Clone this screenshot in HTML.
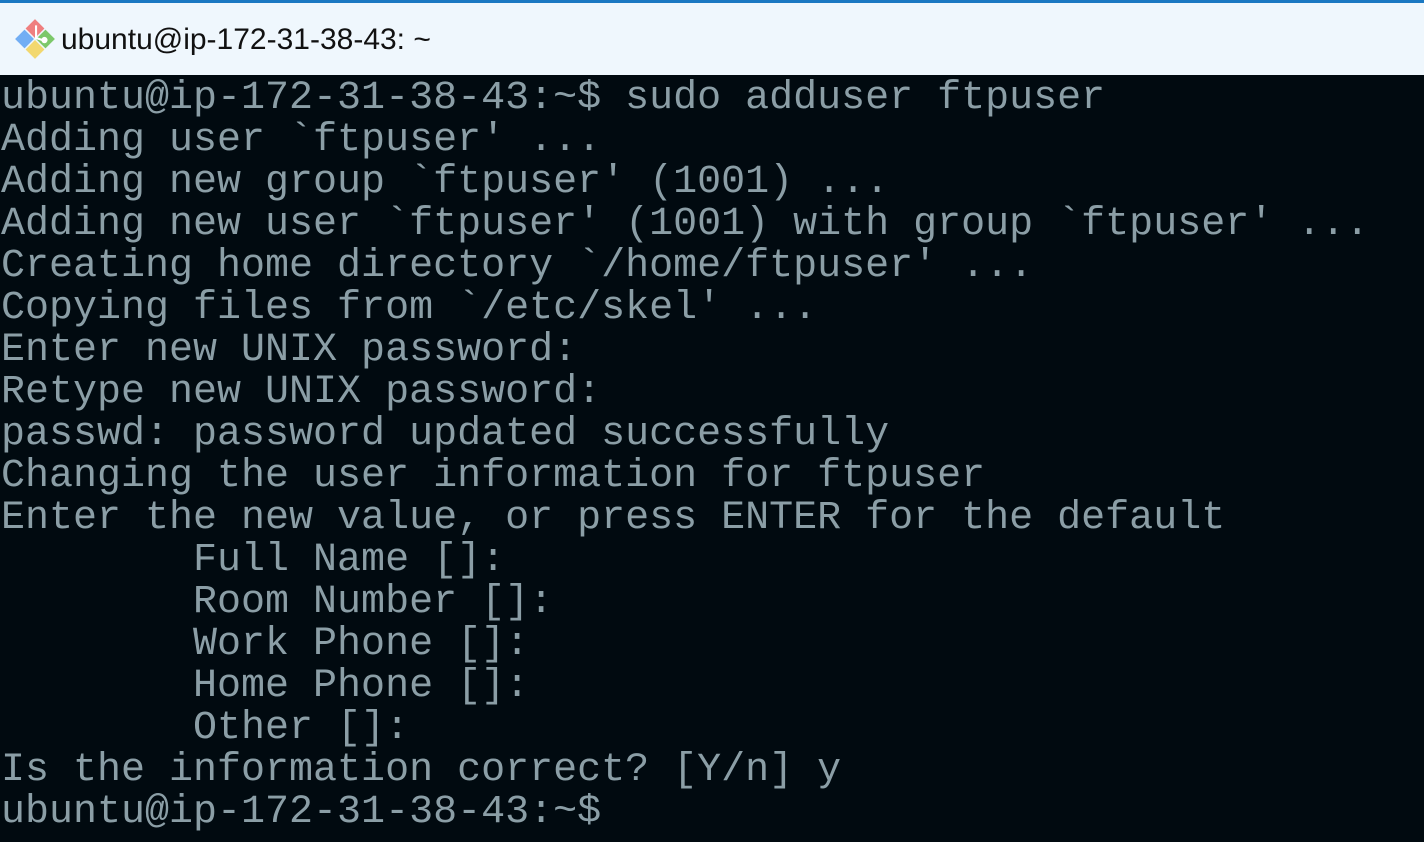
<!DOCTYPE html>
<html><head><meta charset="utf-8"><style>
html,body{margin:0;padding:0;width:1424px;height:842px;overflow:hidden;background:#010a10}
.top{position:absolute;left:0;top:0;width:1424px;height:3px;background:#1a78c2}
.bar{position:absolute;left:0;top:3px;width:1424px;height:72px;background:#eff7fd}
.title{position:absolute;left:61px;top:20px;font:30px "Liberation Sans",sans-serif;color:#111}
.term{position:absolute;left:0;top:75px;width:1424px;height:767px;background:#010a10}
pre{margin:0;position:absolute;left:1px;top:3px;font:40px/42px "Liberation Mono",monospace;color:#8b9ea6;letter-spacing:0}
</style></head><body>
<div class="top"></div>
<div class="bar">
<svg style="position:absolute;left:13px;top:14px" width="44" height="44" viewBox="0 0 42 42">
<path d="M21 2 L30 11 L21 20 L12 11Z" fill="#ef7f7f"/>
<path d="M31 12 L40 21 L31 30 L22 21Z" fill="#7cc86a"/>
<path d="M21 22 L30 31 L21 40 L12 31Z" fill="#f2d86f"/>
<path d="M11 12 L20 21 L11 30 L2 21Z" fill="#72aef4"/>
<circle cx="30" cy="22" r="3" fill="#fff"/><path d="M22 8 L22 20 L28 22" stroke="#fff" stroke-width="2" fill="none"/>
</svg>
<div class="title">ubuntu@ip-172-31-38-43: ~</div>
</div>
<div class="term"><pre>ubuntu@ip-172-31-38-43:~$ sudo adduser ftpuser
Adding user `ftpuser' ...
Adding new group `ftpuser' (1001) ...
Adding new user `ftpuser' (1001) with group `ftpuser' ...
Creating home directory `/home/ftpuser' ...
Copying files from `/etc/skel' ...
Enter new UNIX password:
Retype new UNIX password:
passwd: password updated successfully
Changing the user information for ftpuser
Enter the new value, or press ENTER for the default
        Full Name []:
        Room Number []:
        Work Phone []:
        Home Phone []:
        Other []:
Is the information correct? [Y/n] y
ubuntu@ip-172-31-38-43:~$</pre></div>
</body></html>
